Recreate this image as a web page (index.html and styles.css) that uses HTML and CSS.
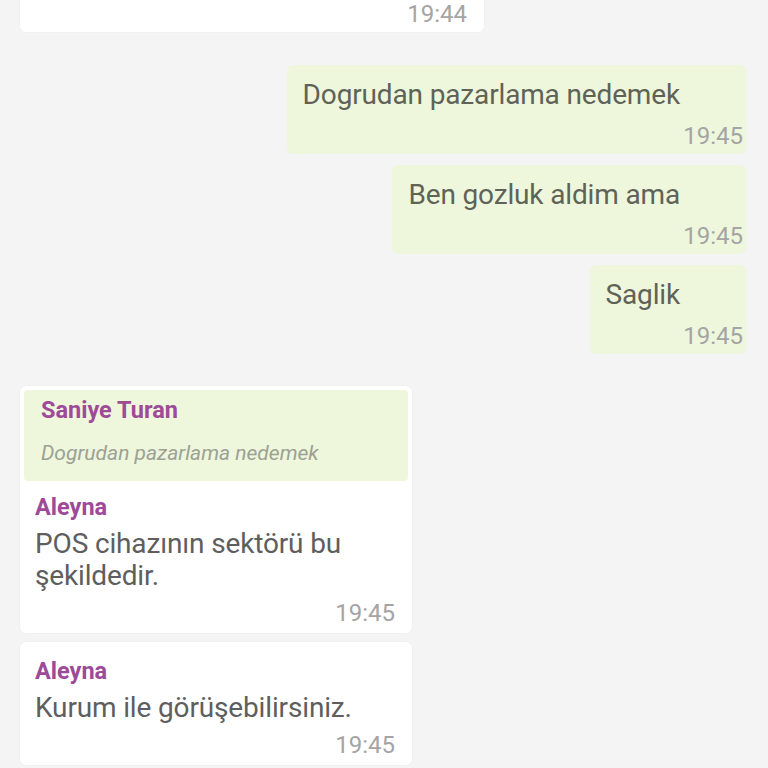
FILE: index.html
```html
<!DOCTYPE html>
<html lang="tr">
<head>
<meta charset="utf-8">
<title>Sohbet</title>
<link rel="stylesheet" href="styles.css">
</head>
<body>
<div class="chat">
  <div class="msg in wide first">
    <div class="body">
      <div class="time">19:44</div>
    </div>
  </div>

  <div class="msg out">
    <div class="text">Dogrudan pazarlama nedemek</div>
    <div class="time">19:45</div>
  </div>
  <div class="msg out">
    <div class="text">Ben gozluk aldim ama</div>
    <div class="time">19:45</div>
  </div>
  <div class="msg out">
    <div class="text">Saglik</div>
    <div class="time">19:45</div>
  </div>

  <div class="msg in">
    <div class="quote">
      <div class="name">Saniye Turan</div>
      <div class="quote-text">Dogrudan pazarlama nedemek</div>
    </div>
    <div class="body after-quote">
      <div class="name">Aleyna</div>
      <div class="text">POS cihazının sektörü bu şekildedir.</div>
      <div class="time">19:45</div>
    </div>
  </div>
  <div class="msg in">
    <div class="body">
      <div class="name">Aleyna</div>
      <div class="text">Kurum ile görüşebilirsiniz.</div>
      <div class="time">19:45</div>
    </div>
  </div>
</div>
</body>
</html>
```

FILE: styles.css
```css
html, body {
  margin: 0;
  padding: 0;
  background: #f4f4f4;
  height: 768px;
  overflow: hidden;
}

body {
  font-family: Roboto, "Noto Sans", "Liberation Sans", sans-serif;
}

.chat {
  display: flex;
  flex-direction: column;
  padding: 0 22px 0 20px;
}

.msg {
  border-radius: 6px;
  box-sizing: border-box;
  margin-top: 33px;
}

.msg.first {
  margin-top: -15px;
}

.msg.first .body {
  padding-bottom: 0;
}

.msg.out + .msg.in {
  margin-top: 32px;
}

.msg.in + .msg.in {
  margin-top: 9px;
}

.msg.out + .msg.out {
  margin-top: 11px;
}

/* incoming */
.msg.in {
  align-self: flex-start;
  width: 392px;
  background: #ffffff;
  padding: 4px;
  box-shadow: 0 0 0 1px rgba(0, 0, 0, 0.015);
}

.msg.in.wide {
  width: 464px;
}

.body {
  padding: 11px 13px 2px 11px;
}

.body.after-quote {
  padding-top: 12px;
}

.name {
  font-size: 23.5px;
  line-height: 28px;
  font-weight: 700;
  color: #9d4a99;
}

.msg.in .text {
  margin-top: 7px;
  font-size: 28px;
  line-height: 32px;
  letter-spacing: -0.15px;
  color: #5e5e5e;
}

.msg.in .time {
  margin-top: 7px;
}

.msg.in.first .time {
  margin-top: 0;
}

.quote {
  background: #eef6dc;
  border-radius: 4px;
  padding: 6px 17px 14px;
}

.quote-text {
  margin-top: 15px;
  font-size: 21px;
  line-height: 28px;
  font-style: italic;
  color: #9ca194;
}

/* outgoing */
.msg.out {
  align-self: flex-end;
  background: #eef7dc;
  padding: 12px 3px 4px 16px;
}

.msg.out .text {
  padding-right: 63px;
  font-size: 28px;
  line-height: 36px;
  letter-spacing: -0.15px;
  color: #5f6357;
}

.msg.out .time {
  margin-top: 9px;
}

.time {
  text-align: right;
  font-size: 24px;
  line-height: 28px;
  color: #a4a4a4;
}
```
